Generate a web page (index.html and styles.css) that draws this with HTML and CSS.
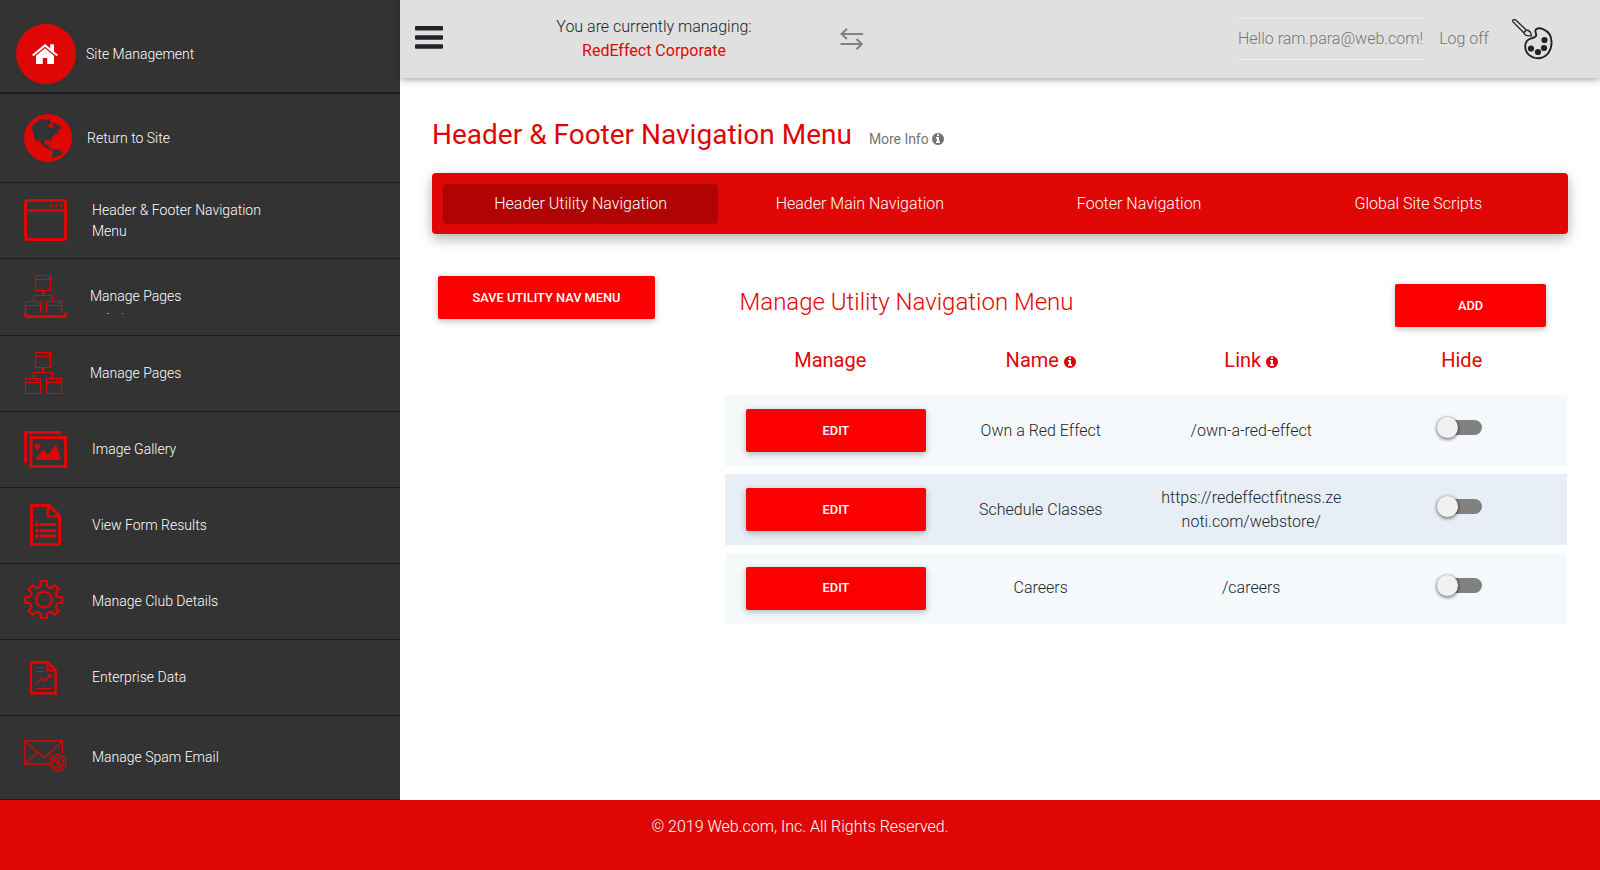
FILE: index.html
```html
<!DOCTYPE html>
<html lang="en">
<head>
<meta charset="utf-8">
<title>Header &amp; Footer Navigation Menu</title>
<link rel="stylesheet" href="styles.css">
</head>
<body>
<svg width="0" height="0" class="defs">
  <symbol id="info" viewBox="0 0 1536 1536"><path fill="currentColor" d="M1024 1248v-160q0-14-9-23t-23-9h-96V544q0-14-9-23t-23-9H544q-14 0-23 9t-9 23v160q0 14 9 23t23 9h96v320h-96q-14 0-23 9t-9 23v160q0 14 9 23t23 9h448q14 0 23-9t9-23zM896 352V192q0-14-9-23t-23-9H672q-14 0-23 9t-9 23v160q0 14 9 23t23 9h192q14 0 23-9t9-23zm640 416q0 209-103 385.500T1153.500 1433 768 1536t-385.500-103T103 1153.500 0 768t103-385.500T382.500 103 768 0t385.500 103T1433 382.500 1536 768z"/></symbol>
  <symbol id="sitemap" viewBox="0 0 43 44">
    <g fill="none" stroke="#df0606" stroke-width="1.200">
      <path d="M11.500.5h15v15h-15zM11.500 4.500h16M1.500 26.500h15v15h-15zM1.500 30.500h15M22.500 26.500h15v15h-15zM22.500 30.500h15M9.500 26v-5.500h19V26"/>
      <path d="M19 15.500v5" stroke-width="2"/>
      <path d="M21 2.500h5.500M10 28.500h5.500M31.500 28.500H37" stroke-dasharray="1.500 .5" opacity=".7"/>
    </g>
  </symbol>
</svg>
<div class="shell">
  <nav class="sidebar">
    <a class="item item-home"><span class="home"><svg width="26" height="20" viewBox="0 0 26 20"><path fill="#fff" d="M13 0 0 10.800l1.400 1.500L13 2.700l11.600 9.600 1.400-1.500-4-3.400V.3h-3.800v4z"/><path fill="#fff" d="M13 4.200 4 11.700V20h6.800v-6h4.400v6H22v-8.300z"/></svg></span><span>Site Management</span></a>
    <a class="item item-return"><svg class="ico" width="48" height="48" viewBox="0 0 48 48"><circle cx="24" cy="24" r="24" fill="#df0606"/><path fill="#333" d="M7 14 L9.500 10.500 12 8 15 6.500 16 5 18 6 20.500 4.500 22 6 25 5.500 26.500 7 28 8.500 26 10 24 11.500 23.500 12.500 26 13 27.500 14.500 29 13.500 28.500 11 29 9 31.500 9 33 10.500 35 10.500 36.500 13 38 14.500 35.500 16 33 16.500 34.500 18.500 31.500 20 29.500 22 27.500 24.500 27 27 25.500 26.500 22.500 25.500 20.500 27 20.500 30 22 31.500 24 30 25 30.500 24 33 26.500 34 27 36.500 28.500 37 26.500 37.500 24 34.500 20.500 33 17.500 30.500 16 27.500 13.500 25 13 26.500 14.500 29 12 27.500 10.500 23.500 9 20 9 17.500z"/><path fill="#333" d="M28.500 36 31 35 35 35.500 38.500 38 37 41 33.500 42 31 43.500 28 44 27.500 43 29 39z"/></svg><span>Return to Site</span></a>
    <a class="item item-header"><svg class="ico" width="43" height="42" viewBox="0 0 43 42"><g fill="none" stroke="#df0606"><rect x="1.500" y="1.500" width="40" height="39" rx="2" stroke-width="3"/><path d="M2 11.500h39" stroke-width="2.500"/><path d="M26.500 6.500h11.500" stroke-width="2.600" stroke-dasharray="2.600 1.900"/></g></svg><span class="wrap">Header &amp; Footer Navigation Menu</span></a>
    <a class="item item-pages-top"><svg class="ico" width="43" height="44"><use href="#sitemap"/><path fill="#333" d="M0 38h43v5H0z"/><path d="M1.500 38v1.500q0 2 2 2h36q2 0 2-2V38" fill="none" stroke="#df0606" stroke-width="2.800"/></svg><span class="stacked">Manage Pages<i class="tick tick-a"></i><i class="tick tick-b"></i></span></a>
    <a class="item item-pages"><svg class="ico" width="43" height="44"><use href="#sitemap"/></svg><span>Manage Pages</span></a>
    <a class="item item-gallery"><svg class="ico" width="43" height="37" viewBox="0 0 43 37"><path d="M1.500 32V1.500H37" fill="none" stroke="#df0606" stroke-width="2.800"/><path d="M7 6.500h34.500v29H7z" fill="none" stroke="#df0606" stroke-width="3"/><circle cx="13.500" cy="15.500" r="2.700" fill="#df0606"/><path fill="#df0606" d="m11 29 8-11 5 6 8-11 5 16z"/></svg><span>Image Gallery</span></a>
    <a class="item item-form"><svg class="ico" width="43" height="42" viewBox="0 0 43 42"><g fill="none" stroke="#df0606"><path d="M7.500 1.500h17.500l10.500 10v29h-28z" stroke-width="3" stroke-linejoin="round"/><path d="M24 2v10.500h11" stroke-width="2.500"/><path d="M16 20.500h16M16 26.500h16M16 32h16" stroke-width="3"/></g><g fill="#df0606"><circle cx="13" cy="20.500" r="2"/><circle cx="13" cy="26.500" r="2"/><circle cx="13" cy="32" r="2"/></g></svg><span>View Form Results</span></a>
    <a class="item item-club"><svg class="ico" width="43" height="40" viewBox="0 0 43 40"><g fill="none" stroke="#df0606" stroke-width="2.200" stroke-linejoin="round"><circle cx="20" cy="19.500" r="7.800"/><path d="M16.500 1.200h6.500v4.300q0 1 1 1.400l2.500 1.100q1 .3 1.600-.4l2.800-2.400 4 4-2.700 3q-.7.800-.2 1.700l1 2.300q.3 1 1.400 1h4.100V23h-4.200q-1 0-1.300.8L31.900 26.500q-.4.900.3 1.600l2.700 2.800-4 4-3-2.700q-.7-.6-1.600-.2l-2.400 1q-.9.300-.9 1.300v3.700h-6.500v-3.800q0-1-.9-1.300l-2.500-1q-.8-.4-1.600.3l-2.900 2.700-3.900-4 2.500-2.900q.7-.7.200-1.600L6.400 24q-.3-1-1.300-1H1.200v-5.800h4q1 0 1.300-1l1-2.400q.4-.9-.2-1.600L4.700 9.300l4-4.100 2.900 2.500q.7.700 1.600.3l2.400-1.100q.9-.3.900-1.300z"/></g></svg><span>Manage Club Details</span></a>
    <a class="item item-data"><svg class="ico" width="43" height="34" viewBox="0 0 43 34"><g fill="none" stroke="#df0606"><path d="M7 1.300h16.500l8.200 8v23H7z" stroke-width="2.400"/><path d="M23.500 1.500v8h8" stroke-width="2.200"/><path d="M12 6.500h9M12 10.500h9M12 27.500h15" stroke-width="1.100"/><path d="m12 23 6-6 3 3 5-5.500" stroke-width="1.500"/></g><circle cx="26" cy="15" r="2" fill="#df0606"/></svg><span>Enterprise Data</span></a>
    <a class="item item-spam"><svg class="ico" width="44" height="32" viewBox="0 0 44 32"><g fill="none" stroke="#df0606" stroke-width="1.300"><path d="M25 24H.8V1h37.700v12.500M1 1.500l19 16.200 18-16M1 23.500 14 12.500M24.500 13.500l2.500 2"/><circle cx="34" cy="22.700" r="8.200"/><circle cx="34" cy="22.700" r="5.500"/><path d="m29.500 19.500 7 7.500M31.500 18l7 7.500"/></g></svg><span>Manage Spam Email</span></a>
  </nav>
  <div class="main">
    <header class="topbar">
      <svg class="bars" width="28" height="23" viewBox="0 0 28 23"><path fill="#212529" d="M1 0h26q1 0 1 1v2.500q0 1-1 1H1q-1 0-1-1V1q0-1 1-1zM1 9.200h26q1 0 1 1v2.500q0 1-1 1H1q-1 0-1-1v-2.500q0-1 1-1zM1 18.200h26q1 0 1 1v2.600q0 1-1 1H1q-1 0-1-1v-2.600q0-1 1-1z"/></svg>
      <div class="managing">You are currently managing:<br><a>RedEffect Corporate</a></div>
      <svg class="swap" width="24" height="23" viewBox="0 0 24 23"><path d="M23 6H1.500M7 .8 1.500 6 7 11M.5 16h21.500M16.500 11l5.300 5-5.300 5.200" fill="none" stroke="#828282" stroke-width="2"/></svg>
      <div class="account"><span class="hello">Hello ram.para@web.com!</span><a>Log off</a></div>
      <svg class="palette" width="41" height="41" viewBox="0 0 41 41"><g fill="none" stroke="#222"><path d="M24 10.300c2-1.300 4.500-1.200 7-.2 6 2.600 9 8.300 8.500 14.500C38.900 33.700 33 39.300 26 39.200c-7 0-12.800-5-12.800-11.700 0-4 2.500-7.200 6-8.200 3-.8 5.300-.8 5-3.500-.2-2-1.700-3.700-.2-5.500z" stroke-width="1.900"/><path d="M.8 2.600Q.3 1 1.500.7 2.800.2 3.700 1L14.300 11l-2.500 2.700zM11.800 13.700l2.500-2.700c2.300.2 4.700 1.700 5.200 5.700-4.500.6-7-.3-7.700-3z" stroke-width="1.300"/></g><g fill="#222"><circle cx="32.500" cy="21" r="3.100"/><circle cx="32" cy="29" r="3.100"/><circle cx="26" cy="33" r="3.100"/><circle cx="19" cy="29.500" r="3.100"/></g></svg>
    </header>
    <div class="heading"><h1>Header &amp; Footer Navigation Menu</h1><span class="more">More Info <svg width="12" height="12"><use href="#info"/></svg></span></div>
    <div class="tabs"><a class="tab active">Header Utility Navigation</a><a class="tab">Header Main Navigation</a><a class="tab">Footer Navigation</a><a class="tab">Global Site Scripts</a></div>
    <div class="content">
      <a class="btn save">SAVE UTILITY NAV MENU</a>
      <section class="manager">
        <div class="manager-top"><h2>Manage Utility Navigation Menu</h2><a class="btn add">ADD</a></div>
        <div class="grid head"><div>Manage</div><div>Name <svg width="12" height="12"><use href="#info"/></svg></div><div>Link <svg width="12" height="12"><use href="#info"/></svg></div><div>Hide</div></div>
        <div class="grid row"><div><a class="btn edit">EDIT</a></div><div>Own a Red Effect</div><div>/own-a-red-effect</div><div><span class="switch"></span></div></div>
        <div class="grid row alt"><div><a class="btn edit">EDIT</a></div><div>Schedule Classes</div><div class="url">https://redeffectfitness.zenoti.com/webstore/</div><div><span class="switch"></span></div></div>
        <div class="grid row last"><div><a class="btn edit">EDIT</a></div><div class="text">Careers</div><div class="text">/careers</div><div><span class="switch"></span></div></div>
      </section>
    </div>
  </div>
</div>
<footer class="footer">© 2019 Web.com, Inc. All Rights Reserved.</footer>
</body>
</html>
```
FILE: styles.css
```css
* { box-sizing: border-box; }
body { margin: 0; font-family: Roboto, "Liberation Sans", sans-serif; font-size: 16px; font-weight: 300; line-height: 24px; color: #212529; background: #fff; height: 870px; overflow: hidden; }
h1, h2 { margin: 0; }
.defs { position: absolute; }
.shell { display: flex; height: 800px; }

.sidebar { width: 400px; background: #333; color: #fff; font-size: 14px; line-height: 21px; }
.item { display: flex; align-items: flex-start; height: 76px; padding-left: 24px; border-bottom: 1px solid #1d1d1d; }
.item > span:last-child { margin-left: 25px; margin-top: 27px; }
.ico { flex: none; }
.item-home { height: 94px; padding-left: 16px; border-bottom-width: 2px; }
.home { display: flex; align-items: center; justify-content: center; width: 60px; height: 60px; margin-top: 24px; border-radius: 50%; background: #df0606; }
.home svg { margin-right: 2px; }
.item-home > span:last-child { margin-left: 10px; margin-top: 44px; }
.item-return { height: 89px; }
.item-return .ico { margin-top: 20px; }
.item-return > span:last-child { margin-left: 15px; margin-top: 34px; }
.item-header .ico { margin-top: 16px; }
.item-header > span:last-child { margin-top: 17px; width: 180px; }
.item-pages-top { height: 77px; }
.item-pages-top .ico, .item-pages .ico { margin-top: 16px; }
.item-pages-top > span:last-child, .item-pages > span:last-child { margin-left: 23px; }
.stacked { position: relative; }
.tick { position: absolute; top: 27px; width: 2px; height: 1px; background: #999; }
.tick-a { left: 17px; }
.tick-b { left: 32px; width: 1px; }
.item-gallery .ico { margin-top: 19px; }
.item-form .ico { margin-top: 16px; }
.item-club .ico { margin-top: 16px; }
.item-data .ico { margin-top: 21px; }
.item-spam { height: 84px; }
.item-spam .ico { margin-top: 24px; }
.item-spam > span:last-child { margin-left: 24px; margin-top: 31px; }

.main { width: 1200px; }
.topbar { display: flex; align-items: flex-start; height: 78px; padding-left: 15px; background: #e0e0e0; box-shadow: 0 2px 5px rgba(0,0,0,.22), 0 2px 10px rgba(0,0,0,.14); }
.bars { margin-top: 26px; }
.managing { width: 300px; margin: 15px 0 0 61px; text-align: center; }
.managing a { color: #df0606; font-weight: 400; }
.swap { margin: 28px 0 0 36px; }
.account { display: flex; gap: 16px; margin: 18px 0 0 374px; color: #777; line-height: 40px; }
.hello { border-top: 1px solid #f0f0f0; border-bottom: 1px solid #f0f0f0; }
.account a { margin-top: 1px; }
.palette { margin: 19px 0 0 23px; }

.heading { display: flex; align-items: baseline; height: 95px; padding: 36px 32px 0; }
.heading h1 { font-size: 28px; font-weight: 400; line-height: 42px; color: #df0606; }
.more { margin-left: 17px; font-size: 14px; font-weight: 400; letter-spacing: -.05px; color: #757575; }
.more svg { vertical-align: -1px; }
.tabs { display: flex; gap: 4px; height: 61px; margin: 0 32px; padding: 11px 12px 10px 11px; border-radius: 4px; background: #df0606; box-shadow: 0 5px 11px rgba(0,0,0,.18), 0 4px 15px rgba(0,0,0,.15); }
.tab { flex: 1; border-radius: 4px; color: #fff; line-height: 40px; text-align: center; }
.tab.active { background: #b00404; }

.content { display: flex; align-items: flex-start; padding: 42px 33px 0 38px; }
.btn { display: block; height: 43px; border-radius: 2px; background: #fb0000; color: #fff; font-size: 12.800px; font-weight: 500; line-height: 43px; text-align: center; box-shadow: 0 2px 5px rgba(0,0,0,.16), 0 2px 10px rgba(0,0,0,.12); }
.save { width: 217px; }
.manager { width: 842px; margin-left: 70px; }
.manager-top { display: flex; justify-content: space-between; padding: 8px 21px 0 14.500px; }
.manager h2 { font-size: 24px; font-weight: 300; line-height: 36px; color: #df0606; }
.add { width: 151px; }
.grid { display: grid; grid-template-columns: repeat(4, 1fr); align-items: center; text-align: center; }
.head { height: 68px; padding-bottom: 2px; font-size: 20px; font-weight: 400; color: #df0606; }
.head svg { vertical-align: -1px; }
.row { height: 71px; margin-bottom: 8px; background: #f5f9fc; }
.last .text { padding-bottom: 2px; }
.last .edit { line-height: 41px; }
.alt { background: #e7eef5; }
.edit { width: 180px; margin-left: 21px; }
.url { width: 184px; margin: 0 auto; overflow-wrap: break-word; }
.switch { position: relative; display: block; width: 40px; height: 15px; margin: -6px auto 0; border-radius: 15px; background: #818181; }
.switch::before { content: ""; position: absolute; top: -3px; left: -5px; width: 21px; height: 21px; border-radius: 50%; background: #f1f1f1; box-shadow: 0 1px 3px 1px rgba(0,0,0,.4); }

.footer { height: 70px; padding-top: 15px; background: #df0606; color: #fff; text-align: center; }
```
